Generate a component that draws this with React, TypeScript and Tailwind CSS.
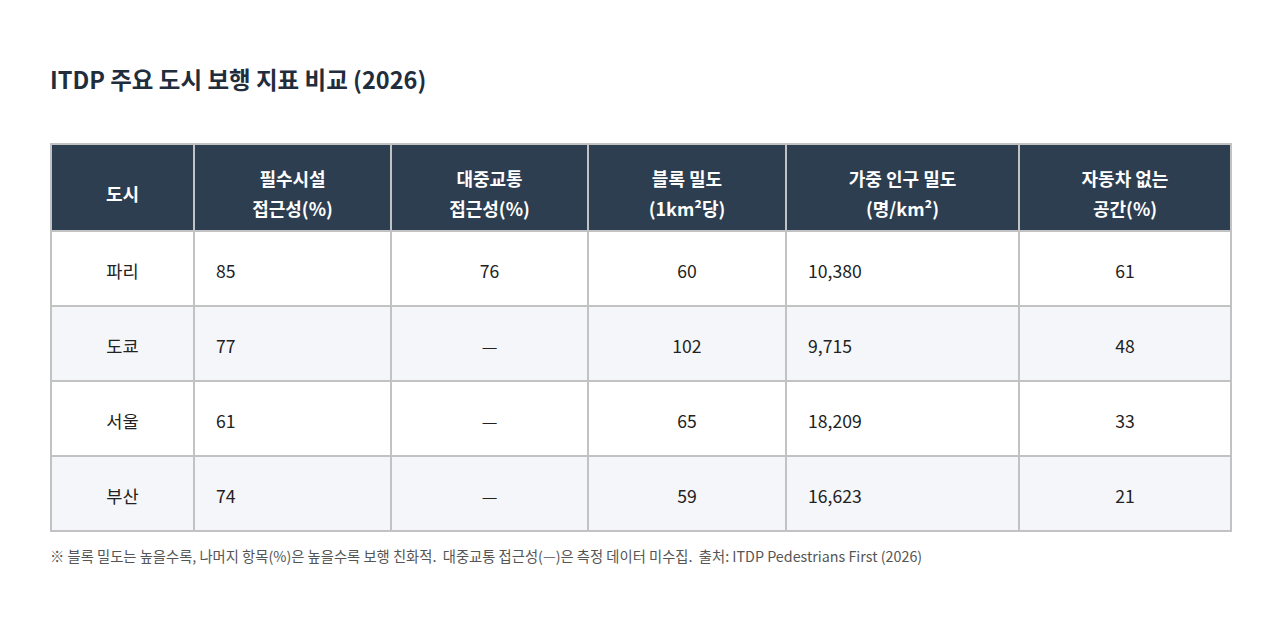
import React from "react";

const rows = [
  ["파리", "85", "76", "60", "10,380", "61"],
  ["도쿄", "77", "—", "102", "9,715", "48"],
  ["서울", "61", "—", "65", "18,209", "33"],
  ["부산", "74", "—", "59", "16,623", "21"],
];

const align = ["text-center", "text-left pl-[21px]", "text-center", "text-center", "text-left pl-[21px]", "text-center"];

export default function App() {
  return (
    <div
      className="w-[1280px] h-[638px] bg-white px-[50px] pt-[63px]"
      style={{ fontFamily: '"Noto Sans CJK KR", "Noto Sans", sans-serif' }}
    >
      <h1 className="text-[23.5px] font-bold text-[#1f2d3d] leading-[32px]">
        ITDP 주요 도시 보행 지표 비교 (2026)
      </h1>
      <table className="mt-[48px] w-[1180px] table-fixed border-collapse border-2 border-[#c2c2c2] text-[17.6px] text-[#222]">
        <colgroup>
          <col className="w-[143px]" />
          <col className="w-[197px]" />
          <col className="w-[197px]" />
          <col className="w-[198px]" />
          <col className="w-[233px]" />
          <col className="w-[212px]" />
        </colgroup>
        <thead>
          <tr className="h-[87px] bg-[#2c3e50] text-white leading-[30px] text-[18px]">
            <th className="border-2 border-[#c2c2c2] font-bold pt-[10px]">도시</th>
            <th className="border-2 border-[#c2c2c2] font-bold pt-[10px]">필수시설<br />접근성(%)</th>
            <th className="border-2 border-[#c2c2c2] font-bold pt-[10px]">대중교통<br />접근성(%)</th>
            <th className="border-2 border-[#c2c2c2] font-bold pt-[10px]">블록 밀도<br />(1km²당)</th>
            <th className="border-2 border-[#c2c2c2] font-bold pt-[10px]">가중 인구 밀도<br />(명/km²)</th>
            <th className="border-2 border-[#c2c2c2] font-bold pt-[10px]">자동차 없는<br />공간(%)</th>
          </tr>
        </thead>
        <tbody>
          {rows.map((r, i) => (
            <tr key={i} className={`h-[75px] ${i % 2 === 1 ? "bg-[#f5f6f9]" : "bg-white"}`}>
              {r.map((c, j) => (
                <td key={j} className={`border-2 border-[#c2c2c2] pt-[6px] ${align[j]}`}>
                  {c}
                </td>
              ))}
            </tr>
          ))}
        </tbody>
      </table>
      <p className="mt-[13px] text-[14.3px] text-[#555] whitespace-pre">
        {"※ 블록 밀도는 높을수록, 나머지 항목(%)은 높을수록 보행 친화적.  대중교통 접근성(—)은 측정 데이터 미수집.  출처: ITDP Pedestrians First (2026)"}
      </p>
    </div>
  );
}
